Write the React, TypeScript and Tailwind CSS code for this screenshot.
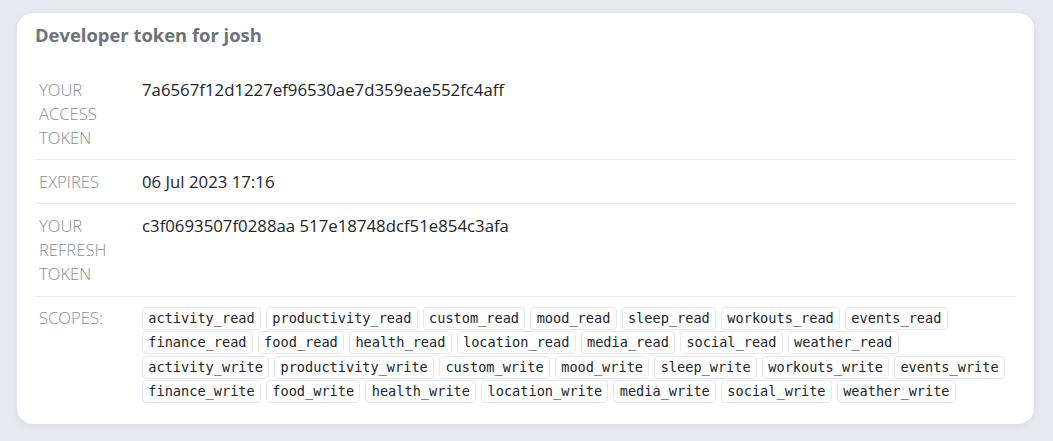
import React from "react";

const scopes = [
  "activity_read","productivity_read","custom_read","mood_read","sleep_read","workouts_read","events_read",
  "finance_read","food_read","health_read","location_read","media_read","social_read","weather_read",
  "activity_write","productivity_write","custom_write","mood_write","sleep_write","workouts_write","events_write",
  "finance_write","food_write","health_write","location_write","media_write","social_write","weather_write",
];

function Row({ label, children, last }: { label: string; children: React.ReactNode; last?: boolean }) {
  return (
    <div className={"grid grid-cols-[103px_1fr] " + (last ? "" : "border-b border-[#e9eaf0]")}>
      <div className="pl-1 py-[9.6px] text-[16.6px] leading-6 font-light uppercase text-[#858e98]">{label}</div>
      <div className="pl-1 py-[9.6px] text-[16.8px] leading-6 text-[#212529]">{children}</div>
    </div>
  );
}

export default function App() {
  return (
    <div className="min-h-[441px] w-[1053px] bg-[#e8e8f1] pt-[13px] pl-[17px] pr-[19px]" style={{ fontFamily: '"Open Sans", sans-serif' }}>
      <div className="bg-white rounded-[16px] shadow-[0_2px_6px_rgba(120,120,160,0.12)] px-[18px] pt-[8px] pb-[11px]">
        <h1 className="text-[18.4px] leading-[27px] font-bold text-[#6c737b] mb-[20px]">Developer token for josh</h1>
        <div>
          <Row label="Your access token">7a6567f12d1227ef96530ae7d359eae552fc4aff</Row>
          <Row label="Expires">06 Jul 2023 17:16</Row>
          <Row label="Your refresh token">c3f0693507f0288aa 517e18748dcf51e854c3afa</Row>
          <Row label="Scopes:" last>
            <div className="flex flex-wrap gap-x-[5px] gap-y-[1.3px] pt-[1px]">
              {scopes.map((s) => (
                <span
                  key={s}
                  className="inline-block border border-[#e7e8ef] rounded-[4px] px-[5.3px] h-[23px] leading-[21px] text-[13.6px] text-[#212529]"
                  style={{ fontFamily: '"DejaVu Sans Mono", monospace' }}
                >
                  {s}
                </span>
              ))}
            </div>
          </Row>
        </div>
      </div>
    </div>
  );
}
